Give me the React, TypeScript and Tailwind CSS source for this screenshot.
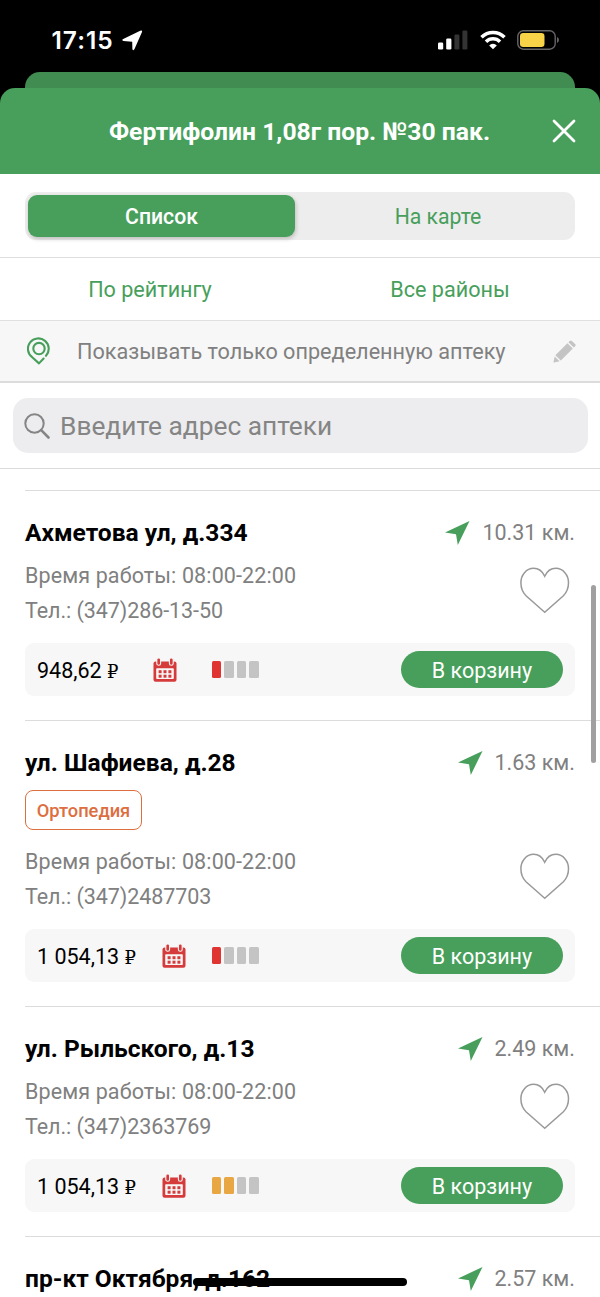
import React from "react";

type Pharmacy = {
  address: string;
  distance: string;
  tag?: string;
  hours?: string;
  phone?: string;
  price?: string;
  level?: number;
};

const pharmacies: Pharmacy[] = [
  {
    address: "Ахметова ул, д.334",
    distance: "10.31 км.",
    hours: "08:00-22:00",
    phone: "(347)286-13-50",
    price: "948,62",
    level: 1,
  },
  {
    address: "ул. Шафиева, д.28",
    distance: "1.63 км.",
    tag: "Ортопедия",
    hours: "08:00-22:00",
    phone: "(347)2487703",
    price: "1 054,13",
    level: 1,
  },
  {
    address: "ул. Рыльского, д.13",
    distance: "2.49 км.",
    hours: "08:00-22:00",
    phone: "(347)2363769",
    price: "1 054,13",
    level: 2,
  },
  { address: "пр-кт Октября, д.162", distance: "2.57 км." },
];

const StatusBar = () => (
  <div className="flex h-[72px] items-start justify-between pl-[51.5px] pr-[40px] pt-[26px] text-white">
    <div className="flex h-7 items-center">
      <span className="w-[63px] whitespace-nowrap font-[Inter,sans-serif] text-[24.5px] font-semibold tracking-[1px]">
        17:15
      </span>
      <svg width="21" height="21" viewBox="0 0 21 21" className="ml-[7px]">
        <path
          d="M1.2 8.9 18.2.8q2.400-.9 1.800 1.300l-7.500 17q-1.200 2.100-2.100.1l-.2-7.500-8.700-.8q-2.300-.6-.3-2Z"
          fill="currentColor"
        />
      </svg>
    </div>
    <div className="flex h-7 items-center">
      <svg width="30" height="20" viewBox="0 0 30 20">
        <rect x="0" y="12.5" width="5.2" height="7" rx="1.3" fill="#fff" />
        <rect x="8.2" y="8.5" width="5.2" height="11" rx="1.3" fill="#fff" />
        <rect x="16.4" y="4.5" width="5" height="15" rx="1.3" fill="#333" />
        <rect x="24.4" y="0.5" width="5" height="19" rx="1.3" fill="#333" />
      </svg>
      <svg width="26" height="20" viewBox="0 0 26 20" className="ml-[12px]">
        <g fill="none" stroke="#fff" strokeWidth="3.5">
          <path d="M1.5 7.2a16.3 16.3 0 0 1 23 0" />
          <path d="M6 11.7a10 10 0 0 1 14 0" />
        </g>
        <path d="m13 19.2-3.8-3.8a5.4 5.4 0 0 1 7.6 0Z" fill="#fff" />
      </svg>
      <svg width="43" height="20" viewBox="0 0 43 20" className="ml-[11px]">
        <rect x="0.8" y="0.8" width="37.4" height="18.4" rx="5.5" fill="none" stroke="#666" strokeWidth="1.4" />
        <rect x="3" y="3" width="24.5" height="14" rx="3.2" fill="#f8d348" />
        <path d="M40 7v6q2-1 2-3t-2-3Z" fill="#666" />
      </svg>
    </div>
  </div>
);

const PinIcon = () => (
  <svg width="24" height="28" viewBox="0 0 24 28" fill="none" stroke="#479f5b" strokeWidth="2.1">
    <path
      d="M19 18.8A10.4 10.4 0 1 0 5.2 20.2L12 26.4l4.6-4.900"
      strokeLinecap="round"
      strokeLinejoin="round"
    />
    <circle cx="12" cy="11.6" r="5.7" />
  </svg>
);

const PencilIcon = () => (
  <svg width="23" height="23" viewBox="0 0 23 23" fill="#c4c4c4">
    <path d="m2.4 15.2 12-12 5.4 5.4-12 12Z" />
    <path d="m15.4 2.2 1.3-1.3q1.1-1 2.2 0l3.2 3.2q1.1 1.1 0 2.2l-1.3 1.3Z" />
    <path d="m1.7 16.4 4.9 4.9-5.6 1.1q-.6 0-.5-.5Z" />
  </svg>
);

const ArrowIcon = () => (
  <svg width="25" height="24" viewBox="0 0 25 24">
    <path d="M0 11.5 24.5 0 12.8 24 11 13.3Z" fill="#479f5b" />
  </svg>
);

const HeartIcon = () => (
  <svg width="50" height="47" viewBox="0 0 50 47" fill="none" stroke="#999" strokeWidth="1.5">
    <path d="M24.7 45.2 6 28.8C2.600 25.300.9 21.300.9 15.800A12.900 14.200 0 0 1 13.600 1.300C18.200 1.300 22.300 4 24.700 9.300 27.100 4 31.200 1.300 35.800 1.300A12.900 14.200 0 0 1 48.500 15.800C48.500 21.300 46.800 25.300 43.400 28.800Z" />
  </svg>
);

const CalendarIcon = () => (
  <svg width="24" height="24" viewBox="0 0 24 24">
    <rect x="0.5" y="3.5" width="23" height="20.3" rx="2" fill="#d53b3b" />
    <rect x="3.2" y="10.3" width="17.6" height="10.8" rx="0.8" fill="#f7f7f7" />
    <g fill="#d53b3b" stroke="#f7f7f7" strokeWidth="1.1">
      <rect x="3.8" y="-0.1" width="3.8" height="7.3" rx="1.8" />
      <rect x="16.4" y="-0.1" width="3.8" height="7.3" rx="1.8" />
    </g>
    <g fill="#d53b3b">
      <rect x="5.6" y="12.2" width="3" height="3" />
      <rect x="10.5" y="12.2" width="3" height="3" />
      <rect x="15.4" y="12.2" width="3" height="3" />
      <rect x="5.6" y="16.7" width="3" height="3" />
      <rect x="10.5" y="16.7" width="3" height="3" />
      <rect x="15.4" y="16.7" width="3" height="3" />
    </g>
  </svg>
);

const StockLevel = ({ level }: { level: number }) => {
  const active = level === 1 ? "bg-[#df3432]" : "bg-[#e9a743]";
  return (
    <div className="flex gap-[3px]">
      {[0, 1, 2, 3].map((i) => (
        <span
          key={i}
          className={`h-[17px] w-[9.4px] rounded-[1.5px] ${i < level ? active : "bg-[#c4c4c4]"}`}
        />
      ))}
    </div>
  );
};

const PharmacyCard = ({ item }: { item: Pharmacy }) => (
  <article
    className={`ml-[25px] shrink-0 border-t border-[#dcdcdc] pr-[25px] ${item.tag ? "h-[286px]" : "h-[230px]"}`}
  >
    <div className="flex h-[67px] items-center justify-between pt-[17px]">
      <h2 className="whitespace-nowrap text-[24.55px] font-bold text-black">{item.address}</h2>
      <div className="flex items-center gap-3 text-[21.5px] text-[#808080]">
        <ArrowIcon />
        <span className="pt-px">{item.distance}</span>
      </div>
    </div>

    {item.tag && (
      <div className="mt-[2px] mb-[14px] flex h-10 w-[117px] items-center justify-center rounded-[8px] border-[1.5px] border-[#dd6e3f] pt-px text-[18.3px] font-medium text-[#dd6e3f]">
        {item.tag}
      </div>
    )}

    {item.price && (
      <>
        <div className="flex h-[85px] justify-between pr-[5px]">
          <div className="whitespace-nowrap text-[21.5px] leading-[35px] text-[#808080]">
            <p className="tracking-[0.12px]">Время работы: {item.hours}</p>
            <p className="tracking-[-0.07px]">Тел.: {item.phone}</p>
          </div>
          <div className="pt-[9px]">
            <HeartIcon />
          </div>
        </div>
        <div className="flex h-[53px] items-center justify-between rounded-[9px] bg-[#f7f7f7] px-3">
          <div className="flex items-center">
            <div className="flex w-[175px] items-center">
              <span className="whitespace-nowrap pt-[3px] text-[21.5px] text-black">
                {item.price}{" "}
                <span className="font-['Liberation_Serif','DejaVu_Serif',serif] text-[18px]">₽</span>
              </span>
              <div className={item.price.length > 6 ? "ml-[26px]" : "ml-[35px]"}>
                <CalendarIcon />
              </div>
            </div>
            <StockLevel level={item.level ?? 0} />
          </div>
          <button className="h-[37px] w-[162px] rounded-full bg-[#479f5b] pt-[3px] text-[21.5px] text-white">
            В корзину
          </button>
        </div>
      </>
    )}
  </article>
);

export default function App() {
  return (
    <div className="relative flex h-[1297px] w-[600px] flex-col overflow-hidden bg-black font-[Roboto,sans-serif]">
      <StatusBar />
      <div className="mx-[25px] h-4 shrink-0 rounded-t-[15px] bg-[#418d51]" />

      <header className="flex h-[86px] shrink-0 items-center rounded-t-[15px] bg-[#479f5b] pr-[24px] pl-[72px] text-white">
        <h1 className="flex-1 whitespace-nowrap pt-px pr-[25px] text-center text-[24.7px] font-bold">
          Фертифолин 1,08г пор. №30 пак.
        </h1>
        <svg width="24" height="24" viewBox="0 0 24 24">
          <path d="m2 2 20 20M22 2 2 22" stroke="#fff" strokeWidth="2.8" strokeLinecap="round" />
        </svg>
      </header>

      <main className="flex min-h-0 flex-1 flex-col bg-white">
        <div className="h-[84px] shrink-0 border-b border-[#dfdfdf] px-[25px] pt-[18px]">
          <div className="flex h-[48px] rounded-[11px] bg-[#ededed] p-[3px] text-[21.2px]">
            <button className="h-[42px] w-[267px] rounded-[9px] bg-[#479f5b] pt-px font-medium text-white shadow-[1px_2px_4px_rgba(0,0,0,0.2)]">
              Список
            </button>
            <button className="flex-1 pt-px pl-[9px] text-[#479f5b]">На карте</button>
          </div>
        </div>

        <div className="grid h-[63px] shrink-0 grid-cols-2 border-b border-[#e0e0e0] pt-[3px] text-[21.6px] text-[#479f5b]">
          <button>По рейтингу</button>
          <button>Все районы</button>
        </div>

        <div className="flex h-[62px] shrink-0 items-center border-b-2 border-[#dcdcdc] bg-[#f7f7f7] pr-[24px] pl-[27px]">
          <PinIcon />
          <span className="ml-[26px] flex-1 whitespace-nowrap pt-[3px] text-[21.65px] text-[#808080]">
            Показывать только определенную аптеку
          </span>
          <PencilIcon />
        </div>

        <div className="h-[86px] shrink-0 border-b border-[#dcdcdc] px-[12.5px] pt-[15px]">
          <div className="flex h-[55px] items-center rounded-[15px] bg-[#ededef] pl-[11.5px] text-[26.3px] text-[#858585]">
            <svg width="26" height="26" viewBox="0 0 26 26" fill="none" stroke="#858585">
              <circle cx="10.5" cy="10.5" r="9.2" strokeWidth="2" />
              <path d="m17.2 17.2 7.3 7.3" strokeWidth="2.6" strokeLinecap="round" />
            </svg>
            <span className="ml-[10px] pt-[2px]">Введите адрес аптеки</span>
          </div>
        </div>

        <section className="flex min-h-0 flex-1 flex-col overflow-hidden pt-[21px]">
          {pharmacies.map((item) => (
            <PharmacyCard key={item.address} item={item} />
          ))}
        </section>
      </main>

      {/* scroll thumb and home indicator float over the list */}
      <div className="absolute top-[585px] right-[4.5px] h-[178px] w-[4.5px] rounded-full bg-[#a0a0a0]" />
      <div className="absolute top-[1278px] left-[193px] h-[8px] w-[214px] rounded-full bg-black" />
    </div>
  );
}
